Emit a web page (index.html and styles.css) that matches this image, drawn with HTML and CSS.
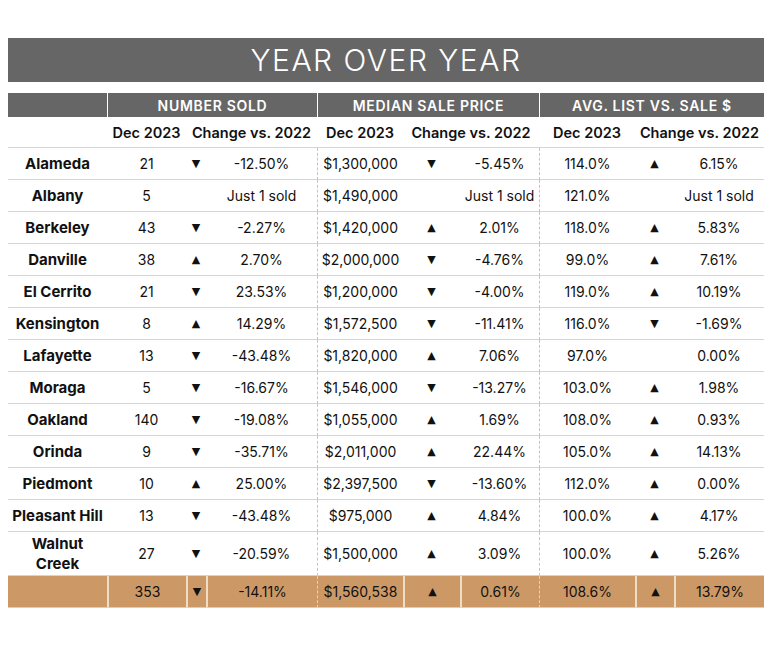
FILE: index.html
```html
<!DOCTYPE html>
<html lang="en">
<head>
<meta charset="utf-8">
<title>Year Over Year</title>
<link rel="stylesheet" href="styles.css">
</head>
<body>
<div class="report">
  <h1 class="title">YEAR OVER YEAR</h1>
  <table class="yoy">
    <colgroup>
      <col class="c-city"><col class="c-num"><col class="c-arrow1"><col class="c-chg1">
      <col class="c-price"><col class="c-arrow2"><col class="c-chg2">
      <col class="c-list"><col class="c-arrow3"><col class="c-chg3">
    </colgroup>
    <thead>
      <tr class="group">
        <th></th>
        <th colspan="3" class="sep">NUMBER SOLD</th>
        <th colspan="3" class="sep">MEDIAN SALE PRICE</th>
        <th colspan="3" class="sep">AVG. LIST VS. SALE $</th>
      </tr>
      <tr class="sub">
        <th></th>
        <th>Dec 2023</th>
        <th colspan="2">Change vs. 2022</th>
        <th>Dec 2023</th>
        <th colspan="2">Change vs. 2022</th>
        <th>Dec 2023</th>
        <th colspan="2">Change vs. 2022</th>
      </tr>
    </thead>
    <tbody>
      <tr><th>Alameda</th><td>21</td><td class="ar">▼</td><td>-12.50%</td><td class="dash">$1,300,000</td><td class="ar">▼</td><td>-5.45%</td><td class="dash">114.0%</td><td class="ar">▲</td><td>6.15%</td></tr>
      <tr><th>Albany</th><td>5</td><td class="ar"></td><td>Just 1 sold</td><td class="dash">$1,490,000</td><td class="ar"></td><td>Just 1 sold</td><td class="dash">121.0%</td><td class="ar"></td><td>Just 1 sold</td></tr>
      <tr><th>Berkeley</th><td>43</td><td class="ar">▼</td><td>-2.27%</td><td class="dash">$1,420,000</td><td class="ar">▲</td><td>2.01%</td><td class="dash">118.0%</td><td class="ar">▲</td><td>5.83%</td></tr>
      <tr><th>Danville</th><td>38</td><td class="ar">▲</td><td>2.70%</td><td class="dash">$2,000,000</td><td class="ar">▼</td><td>-4.76%</td><td class="dash">99.0%</td><td class="ar">▲</td><td>7.61%</td></tr>
      <tr><th>El Cerrito</th><td>21</td><td class="ar">▼</td><td>23.53%</td><td class="dash">$1,200,000</td><td class="ar">▼</td><td>-4.00%</td><td class="dash">119.0%</td><td class="ar">▲</td><td>10.19%</td></tr>
      <tr><th>Kensington</th><td>8</td><td class="ar">▲</td><td>14.29%</td><td class="dash">$1,572,500</td><td class="ar">▼</td><td>-11.41%</td><td class="dash">116.0%</td><td class="ar">▼</td><td>-1.69%</td></tr>
      <tr><th>Lafayette</th><td>13</td><td class="ar">▼</td><td>-43.48%</td><td class="dash">$1,820,000</td><td class="ar">▲</td><td>7.06%</td><td class="dash">97.0%</td><td class="ar"></td><td>0.00%</td></tr>
      <tr><th>Moraga</th><td>5</td><td class="ar">▼</td><td>-16.67%</td><td class="dash">$1,546,000</td><td class="ar">▼</td><td>-13.27%</td><td class="dash">103.0%</td><td class="ar">▲</td><td>1.98%</td></tr>
      <tr><th>Oakland</th><td>140</td><td class="ar">▼</td><td>-19.08%</td><td class="dash">$1,055,000</td><td class="ar">▲</td><td>1.69%</td><td class="dash">108.0%</td><td class="ar">▲</td><td>0.93%</td></tr>
      <tr><th>Orinda</th><td>9</td><td class="ar">▼</td><td>-35.71%</td><td class="dash">$2,011,000</td><td class="ar">▲</td><td>22.44%</td><td class="dash">105.0%</td><td class="ar">▲</td><td>14.13%</td></tr>
      <tr><th>Piedmont</th><td>10</td><td class="ar">▲</td><td>25.00%</td><td class="dash">$2,397,500</td><td class="ar">▼</td><td>-13.60%</td><td class="dash">112.0%</td><td class="ar">▲</td><td>0.00%</td></tr>
      <tr><th>Pleasant Hill</th><td>13</td><td class="ar">▼</td><td>-43.48%</td><td class="dash">$975,000</td><td class="ar">▲</td><td>4.84%</td><td class="dash">100.0%</td><td class="ar">▲</td><td>4.17%</td></tr>
      <tr class="tall"><th>Walnut<br>Creek</th><td>27</td><td class="ar">▼</td><td>-20.59%</td><td class="dash">$1,500,000</td><td class="ar">▲</td><td>3.09%</td><td class="dash">100.0%</td><td class="ar">▲</td><td>5.26%</td></tr>
    </tbody>
    <tfoot>
      <tr class="total"><th></th><td class="div">353</td><td class="ar div">▼</td><td class="div">-14.11%</td><td class="dash">$1,560,538</td><td class="ar div">▲</td><td class="div">0.61%</td><td class="dash">108.6%</td><td class="ar div">▲</td><td class="div">13.79%</td></tr>
    </tfoot>
  </table>
</div>
</body>
</html>
```

FILE: styles.css
```css
* { box-sizing: border-box; }

body {
  margin: 0;
  padding: 38px 8px 0;
  background: #ffffff;
  font-family: "Inter", "Liberation Sans", sans-serif;
  color: #111111;
}

.report {
  width: 756px;
}

.title {
  margin: 0;
  height: 44px;
  background: #666666;
  color: #ffffff;
  font-size: 30px;
  font-weight: 300;
  line-height: 44px;
  letter-spacing: 1.5px;
  text-align: center;
}

.yoy {
  margin-top: 11px;
  width: 756px;
  table-layout: fixed;
  border-collapse: separate;
  border-spacing: 0;
}

.c-city { width: 99px; }
.c-num { width: 79px; }
.c-arrow1 { width: 20px; }
.c-chg1 { width: 111px; }
.c-price { width: 86px; }
.c-arrow2 { width: 57px; }
.c-chg2 { width: 79px; }
.c-list { width: 96px; }
.c-arrow3 { width: 39px; }
.c-chg3 { width: 90px; }

.yoy th,
.yoy td {
  padding: 0;
  text-align: center;
  white-space: nowrap;
}

.group th {
  height: 24px;
  background: #666666;
  color: #ffffff;
  font-size: 14px;
  font-weight: 600;
  letter-spacing: 0.7px;
}

.group th.sep {
  border-left: 1px solid #ffffff;
}

.sub th {
  height: 31px;
  font-size: 14.5px;
  font-weight: 600;
  color: #111111;
  border-bottom: 1px solid #d4d4d4;
}

tbody th,
tbody td,
tfoot th,
tfoot td {
  height: 32px;
  border-bottom: 1px solid #d4d4d4;
  font-size: 14px;
}

tbody th {
  font-size: 15px;
  font-weight: 700;
  padding: 0 2px;
  line-height: 20px;
}

tbody td,
tfoot td {
  font-weight: 400;
}

.ar {
  font-family: "DejaVu Sans", sans-serif;
  font-size: 11px;
}

.dash {
  border-left: 1px dashed #c4c4c4;
}

.tall th,
.tall td {
  height: 44px;
}

.total th,
.total td {
  background: #cc9966;
  border-bottom: 1px solid #cfcfcf;
}

.total .div {
  border-left: 2px solid #f1dcc4;
}

.total .dash {
  border-left: 1px dashed #e3d2bf;
}
```
